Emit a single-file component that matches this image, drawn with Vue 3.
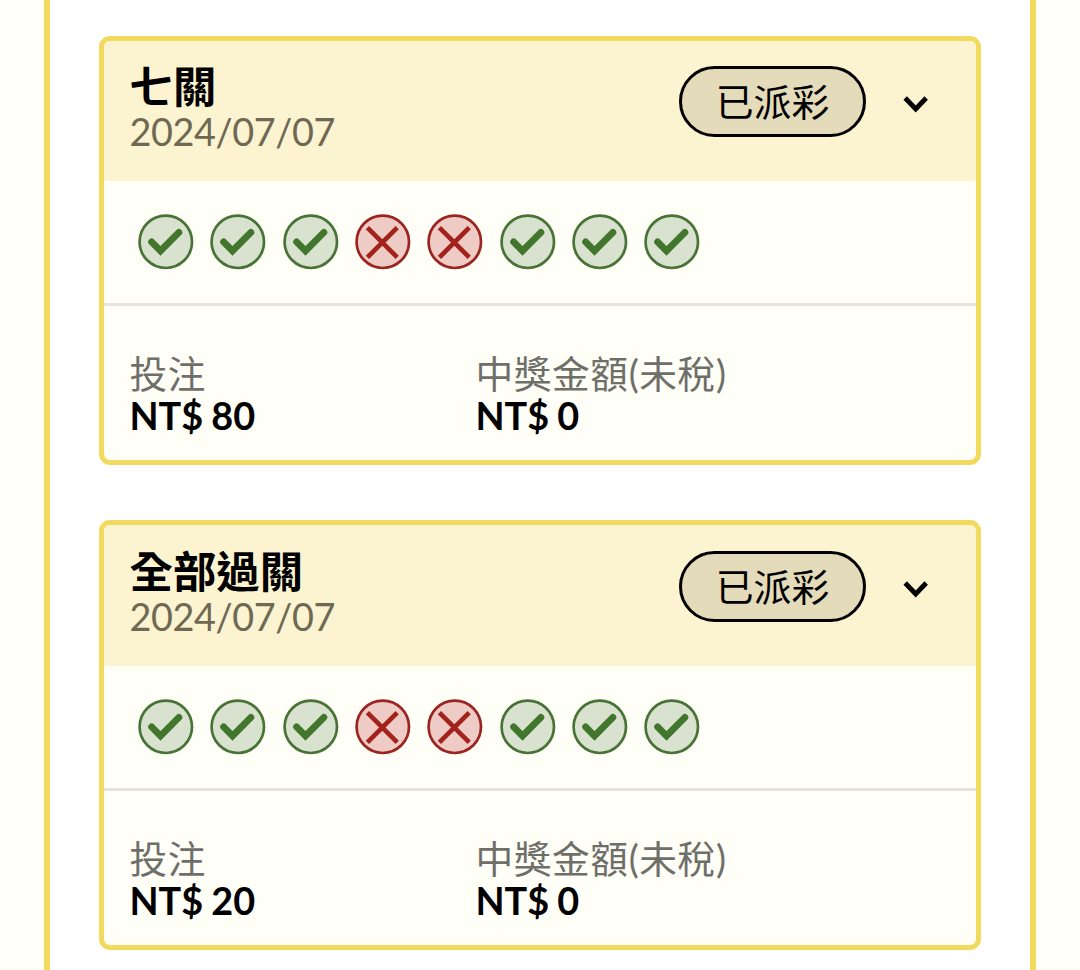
<template>
  <div class="page">
    <div class="bet-list">
      <section v-for="bet in bets" :key="bet.title" class="bet-card">
        <!-- Card header: title, date and status -->
        <header class="card-header">
          <div class="card-heading">
            <h2 class="card-title">{{ bet.title }}</h2>
            <div class="card-date">{{ bet.date }}</div>
          </div>
          <span class="status">{{ bet.status }}</span>
          <button class="btn-toggle" type="button" aria-label="toggle">
            <svg viewBox="0 0 30 24" width="30" height="24">
              <path d="M4.2 6 L14.7 17 L25.2 6" />
            </svg>
          </button>
        </header>

        <!-- One mark per game -->
        <div class="results">
          <svg
            v-for="(hit, i) in bet.results"
            :key="i"
            class="mark"
            :class="hit ? 'mark-hit' : 'mark-miss'"
            viewBox="0 0 56 56"
          >
            <circle cx="27.8" cy="27.8" r="26.2" />
            <path v-if="hit" d="M13.6 27.9 L22.5 36.9 L40.9 18.4" />
            <path v-else d="M12.4 13.6 L42.2 43.4 M42.2 13.6 L12.4 43.4" />
          </svg>
        </div>

        <!-- Amounts -->
        <div class="amounts">
          <div class="amount">
            <div class="amount-label">投注</div>
            <div class="amount-value">NT$ {{ bet.stake }}</div>
          </div>
          <div class="amount">
            <div class="amount-label">中獎金額(未稅)</div>
            <div class="amount-value">NT$ {{ bet.prize }}</div>
          </div>
        </div>
      </section>
    </div>
  </div>
</template>

<script setup>
import { ref } from 'vue'

const bets = ref([
  {
    title: '七關',
    date: '2024/07/07',
    status: '已派彩',
    results: [true, true, true, false, false, true, true, true],
    stake: 80,
    prize: 0
  },
  {
    title: '全部過關',
    date: '2024/07/07',
    status: '已派彩',
    results: [true, true, true, false, false, true, true, true],
    stake: 20,
    prize: 0
  }
])
</script>

<style>
body {
  margin: 0;
  background-color: #fffef7;
}
</style>

<style scoped>
.page {
  box-sizing: border-box;
  height: 970px;
  padding: 0 44px;
  overflow: hidden;
  background-color: #fffef7;
  font-family: Lato, 'Noto Sans CJK TC', sans-serif;
  color: #000;
}

.bet-list {
  box-sizing: border-box;
  height: 100%;
  display: flex;
  flex-direction: column;
  gap: 55px;
  padding: 36px 49px 0;
  border: solid #f2da5e;
  border-width: 0 6px;
  background-color: #fff;
}

.bet-card {
  box-sizing: border-box;
  flex: none;
  height: 429.4px;
  border: 5px solid #f2da5e;
  border-radius: 11px;
  background-color: #fffef7;
  overflow: hidden;
}

.card-header {
  box-sizing: border-box;
  height: 140.2px;
  display: flex;
  align-items: flex-start;
  padding: 25.2px 45px 0 25.5px;
  background-color: #fcf3d0;
}

.card-heading {
  flex: 1;
}

.card-title {
  margin: -1px 0 1px;
  font-size: 43.4px;
  line-height: 43px;
  font-weight: 700;
}

.card-date {
  font-size: 37.8px;
  line-height: 45px;
  letter-spacing: -0.4px;
  color: #6f6853;
}

.status {
  box-sizing: border-box;
  width: 187px;
  height: 71px;
  border: 3px solid #000;
  border-radius: 36px;
  background-color: #e4dbbb;
  font-size: 37.8px;
  line-height: 66px;
  font-weight: 400;
  text-align: center;
}

.btn-toggle {
  display: flex;
  margin: 26px 0 0 35px;
  padding: 0;
  border: none;
  background: none;
}

.btn-toggle path {
  fill: none;
  stroke: #000;
  stroke-width: 4.8;
}

.results {
  box-sizing: border-box;
  height: 125px;
  display: flex;
  gap: 16.35px;
  padding: 33px 0 0 34px;
  border-bottom: 3px solid #e5e5dd;
}

.mark {
  flex: none;
  width: 56px;
  height: 56px;
}

.mark circle {
  stroke-width: 2.7;
}

.mark path {
  fill: none;
}

.mark-hit circle {
  fill: #d9e2cf;
  stroke: #477336;
}

.mark-hit path {
  stroke: #42762c;
  stroke-width: 6.8;
  stroke-linecap: round;
}

.mark-miss circle {
  fill: #efcbc5;
  stroke: #9b2420;
}

.mark-miss path {
  stroke: #a3221b;
  stroke-width: 4.6;
}

.amounts {
  display: flex;
  padding: 47px 25.5px 0;
}

.amount {
  width: 346px;
}

.amount-label {
  margin-bottom: 1px;
  font-size: 37.7px;
  line-height: 41px;
  font-weight: 400;
  letter-spacing: 0.6px;
  color: #6f6f6a;
  white-space: nowrap;
}

.amount-value {
  font-size: 37.8px;
  line-height: 41px;
  font-weight: 700;
  word-spacing: -1.2px;
}
</style>
